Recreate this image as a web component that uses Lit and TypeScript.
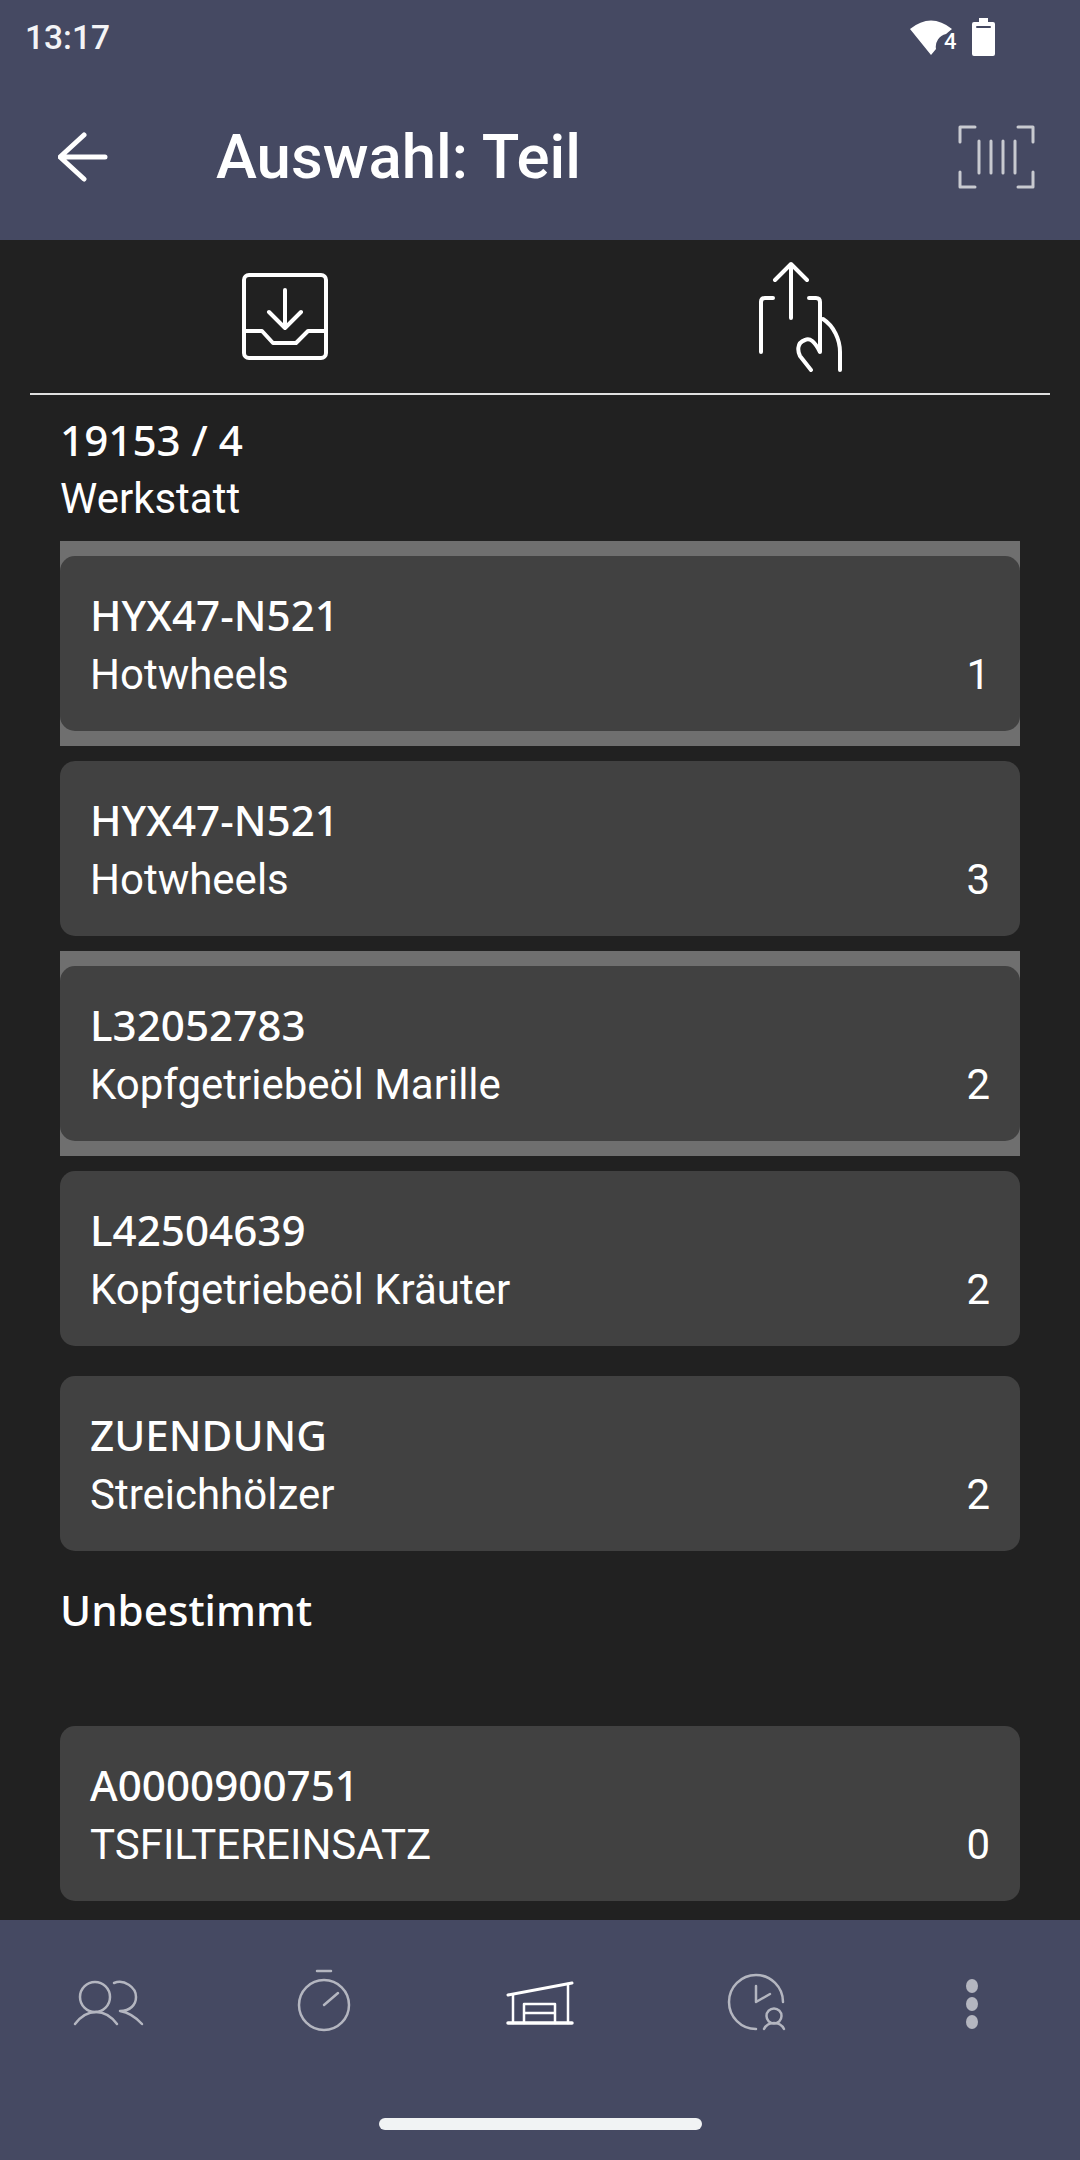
import { LitElement, html, css } from "lit";
import { customElement } from "lit/decorators.js";

const rows = [
  { code: "HYX47-N521", name: "Hotwheels", qty: 1, sel: true },
  { code: "HYX47-N521", name: "Hotwheels", qty: 3, sel: false },
  { code: "L32052783", name: "Kopfgetriebeöl Marille", qty: 2, sel: true },
  { code: "L42504639", name: "Kopfgetriebeöl Kräuter", qty: 2, sel: false },
  { code: "ZUENDUNG", name: "Streichhölzer", qty: 2, sel: false },
];

@customElement("app-root")
export class AppRoot extends LitElement {
  static styles = css`
    :host { display: block; width: 1080px; height: 2160px; overflow: hidden; background: #212121; color: #fff; font-family: Roboto, sans-serif; }
    .page { display: flex; flex-direction: column; height: 2160px; }
    .top { background: #454962; height: 240px; flex: none; display: flex; flex-direction: column; }
    .status { height: 74px; display: flex; align-items: center; justify-content: space-between; padding-left: 25px; font-size: 33.5px; font-weight: 500; color: #f4f4f6; }
    .toolbar { flex: 1; display: flex; align-items: center; padding: 0 43px 0 58px; }
    .title { font-size: 61.7px; font-weight: 500; margin-left: 108px; flex: 1; }
    svg { display: block; fill: none; stroke-linecap: round; stroke-linejoin: round; }
    .w { stroke: #fff; }
    .g { stroke: #b4b6c0; }
    .tabs { margin: 0 30px; height: 155px; flex: none; display: flex; border-bottom: 2px solid #e0e0e0; box-sizing: border-box; }
    .tab { flex: 1; display: flex; align-items: center; justify-content: center; }
    main { flex: 1; min-height: 0; overflow: hidden; padding: 17px 60px 0; }
    .head { margin-bottom: 13px; }
    .wrap + .head { margin-top: 16px; }
    .l1, .l2 { height: 58px; line-height: 58px; white-space: nowrap; }
    .l1 { font-family: "Noto Sans", sans-serif; font-size: 42.2px; font-weight: 550; }
    .head .l1 { margin-top: -1px; margin-bottom: 1px; }
    .l2 { font-size: 42px; font-weight: 400; padding-top: 2px; margin-bottom: -2px; }
    .head .l2 { padding-top: 0; margin-bottom: 0; }
    .wrap { padding: 15px 0; }
    .wrap.sel { background: #6f6f6f; }
    .card { background: #414141; border-radius: 15px; height: 175px; box-sizing: border-box; padding: 30px 30px 0; display: flex; justify-content: space-between; align-items: flex-end; }
    .card .texts { align-self: flex-start; }
    .qty { font-size: 42px; height: 58px; line-height: 58px; margin-bottom: 27px; }
    footer { background: #454962; height: 240px; flex: none; display: flex; flex-direction: column; }
    .nav { height: 168px; display: grid; grid-template-columns: repeat(5, 1fr); }
    .nav div { display: flex; align-items: center; justify-content: center; }
    .home { width: 323px; height: 12px; border-radius: 6px; background: #f1f3f4; margin: 30px auto 0; }
    .dot { width: 12px; height: 14px; border-radius: 50%; background: #b4b6c0; }
    .dots { flex-direction: column; gap: 4px; }
    .wifi { position: relative; display: flex; align-items: center; }
    .four { position: absolute; left: 34px; top: 12px; font-size: 22px; font-weight: 500; line-height: 24px; color: #fff; }
    .sicons { display: flex; align-items: center; gap: 18px; padding-right: 84px; }
  `;

  render() {
    return html`<div class="page">
      <div class="top">
        <div class="status">
          <span>13:17</span>
          <div class="sicons">
            <div class="wifi">
              <svg width="44" height="38" viewBox="911 16 44 38"><path d="M932 53 L911 27 Q932 10 953 27 L947 32 A 13 13 0 0 0 937 47 Z" fill="#fff" stroke="none"/></svg>
              <span class="four">4</span>
            </div>
            <svg width="24" height="40" viewBox="973 15 24 40"><path d="M980 16 H989 V20 H994 Q996 20 996 22 V52 Q996 54 994 54 H975 Q973 54 973 52 V22 Q973 20 975 20 H980 Z" fill="#fff" stroke="none"/><path d="M978 25 H991" stroke="#454962" stroke-width="2"/></svg>
          </div>
        </div>
        <div class="toolbar">
          <svg width="50" height="50" viewBox="58 130 50 50" class="w" stroke-width="5"><path d="M61 155 H105 M84 133 L60 155 L84 177"/></svg>
          <div class="title">Auswahl: Teil</div>
          <svg width="80" height="68" viewBox="956 122 80 68" stroke="#c8cad0" stroke-width="3" stroke-linecap="butt"><path d="M974 126 H959 V141 M1017 126 H1032 V141 M974 186 H959 V171 M1017 186 H1032 V171 M978 140 V172 M990 140 V172 M1002 140 V172 M1014 140 V172"/></svg>
        </div>
      </div>
      <div class="tabs">
        <div class="tab"><svg width="90" height="92" viewBox="240 272 90 92" class="w" stroke-width="4"><rect x="244" y="276" width="82" height="83" rx="5"/><path d="M285 291 V329 M269 313 L285 329 L301 313 M244 332 H262 L273 344 H296 L308 332 H326"/></svg></div>
        <div class="tab"><svg width="94" height="112" viewBox="748 261 94 112" class="w" stroke-width="4"><path d="M791 318 V264 M775 280 L791 264 L807 280 M761 352 V302 Q761 298 765 298 H773 M809 298 H816 Q820 298 820 302 V352 Q812 336 805 340 C 796 343 798 352 800 356 L811 370 M823 319 C 834 326 840 340 840 352 V370"/></svg></div>
      </div>
      <main>
        <div class="head"><div class="l1">19153 / 4</div><div class="l2">Werkstatt</div></div>
        ${rows.map((r) => this.row(r.code, r.name, r.qty, r.sel))}
        <div class="head"><div class="l1">Unbestimmt</div><div class="l2"></div></div>
        ${this.row("A0000900751", "TSFILTEREINSATZ", 0, false)}
      </main>
      <footer>
        <div class="nav">
          <div><svg width="80" height="60" viewBox="68 1975 80 60" class="g" stroke-width="2.5"><circle cx="95" cy="1998" r="15"/><path d="M75 2025 Q84 2013 96 2013 Q108 2013 117 2025 M114 1984 C 124 1980 136 1988 136 1998 C 136 2006 130 2012 120 2012 Q132 2014 142 2025"/></svg></div>
          <div><svg width="60" height="70" viewBox="294 1970 60 70" class="g" stroke-width="2.5"><circle cx="324" cy="2006" r="25"/><path d="M317 1972 H331 M324 2006 L338 1994"/></svg></div>
          <div><svg width="70" height="50" viewBox="505 1978 70 50" class="w" stroke-width="2.5"><path d="M508 1994 L572 1982" stroke-width="3"/><path d="M508 2022 H572" stroke-width="3.5"/><path d="M513 1994 V2022 M568 1983 V2022 M524 2022 V2003 H555 V2022 M524 2012 H555"/></svg></div>
          <div><svg width="64" height="64" viewBox="724 1974 64 64" class="g" stroke-width="2.5"><path d="M783 2004 A 27 27 0 1 0 756 2031 M756 1988 V2004 L770 1996"/><circle cx="774" cy="2018" r="7.5"/><path d="M764 2031 Q767 2025 774 2025 Q781 2025 784 2031"/></svg></div>
          <div class="dots"><span class="dot"></span><span class="dot"></span><span class="dot"></span></div>
        </div>
        <div class="home"></div>
      </footer>
    </div>`;
  }

  row(code: string, name: string, qty: number, sel: boolean) {
    return html`<div class="wrap ${sel ? "sel" : ""}">
      <div class="card">
        <div class="texts"><div class="l1">${code}</div><div class="l2">${name}</div></div>
        <div class="qty">${qty}</div>
      </div>
    </div>`;
  }
}
